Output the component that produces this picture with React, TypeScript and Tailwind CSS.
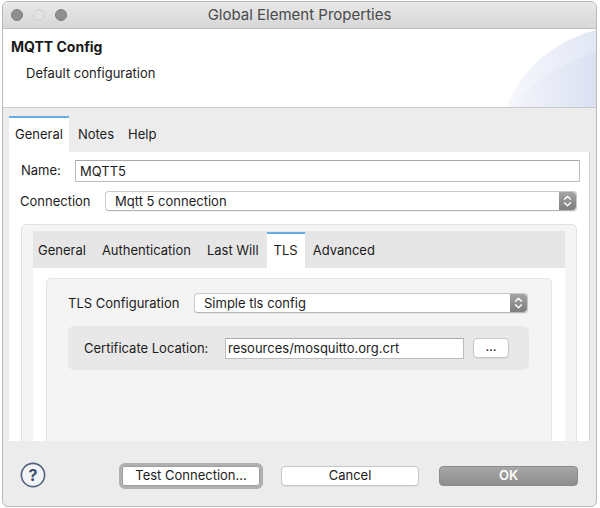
import type { ReactNode } from "react";

function Stepper() {
  return (
    <span className="flex w-[17px] items-center justify-center rounded-r-[4px] bg-gradient-to-b from-[#a4a4a4] to-[#7e7e7e]">
      <svg width="9" height="14" viewBox="0 0 9 14" fill="none">
        <path d="M1.5 5.2 L4.5 2.2 L7.5 5.2" stroke="white" strokeWidth="1.4" strokeLinecap="round" strokeLinejoin="round" />
        <path d="M1.5 8.8 L4.5 11.8 L7.5 8.8" stroke="white" strokeWidth="1.4" strokeLinecap="round" strokeLinejoin="round" />
      </svg>
    </span>
  );
}

function Select({ value, className = "" }: { value: string; className?: string }) {
  return (
    <div
      className={`flex h-[20px] items-stretch rounded-[4px] border border-[#c9c9c9] border-b-[#b5b5b5] bg-white shadow-[0_1px_1px_rgba(0,0,0,0.06)] ${className}`}
    >
      <span className="flex-1 pl-[9px] text-[13px] leading-[18px] text-[#1c1c1c]">{value}</span>
      <Stepper />
    </div>
  );
}

function TextInput({ value, className = "" }: { value: string; className?: string }) {
  return (
    <div
      className={`border border-[#bdbdbd] border-t-[#a9a9a9] bg-white text-[13px] text-[#1c1c1c] ${className}`}
    >
      {value}
    </div>
  );
}

function Tab({ label, active, className = "" }: { label: string; active?: boolean; className?: string }) {
  return (
    <div
      className={`flex items-center text-[13px] text-[#1c1c1c] ${
        active ? "border-t-2 border-[#66ade2] bg-white" : "border-t-2 border-transparent"
      } ${className}`}
    >
      {label}
    </div>
  );
}

function Button({ children, className = "" }: { children: ReactNode; className?: string }) {
  return (
    <div
      className={`flex items-center justify-center text-[13px] text-[#1c1c1c] ${className}`}
    >
      {children}
    </div>
  );
}

export default function App() {
  return (
    <div className="h-[508px] w-[600px] bg-white pl-[2px] pt-px font-['Inter',sans-serif]">
      <div className="flex h-[506px] w-[595px] flex-col overflow-hidden rounded-[6px] border border-[#b9b9b9] bg-[#ececec]">
        {/* title bar */}
        <div className="grid h-[27px] shrink-0 grid-cols-[1fr_auto_1fr] items-center border-b border-[#bdbdbd] bg-gradient-to-b from-[#e9e9e9] to-[#d7d7d7]">
          <div className="flex items-center gap-[10px] pl-[8px]">
            <span className="h-[12px] w-[12px] rounded-full border border-[#7f7f7f] bg-[#8f8f8f]" />
            <span className="h-[12px] w-[12px] rounded-full border border-[#cbcbcb] bg-[#e2e2e2]" />
            <span className="h-[12px] w-[12px] rounded-full border border-[#7f7f7f] bg-[#8f8f8f]" />
          </div>
          <div className="pt-px text-[15px] text-[#4a4a4a]">Global Element Properties</div>
          <div />
        </div>

        {/* header */}
        <div className="flex h-[79px] shrink-0 border-b border-[#cacaca] bg-white">
          <div className="flex-1 pl-[8px] pt-[9px]">
            <div className="text-[14px] font-bold leading-[18px] text-[#1a1a1a]">MQTT Config</div>
            <div className="ml-[15px] mt-[9px] text-[13px] leading-[16px] text-[#1c1c1c]">Default configuration</div>
          </div>
          <svg width="89" height="78" viewBox="0 0 89 78" className="shrink-0">
            <defs>
              <linearGradient id="arcA" x1="0" y1="0" x2="1" y2="0">
                <stop offset="0%" stopColor="#f7f8fc" />
                <stop offset="100%" stopColor="#e2e7f5" />
              </linearGradient>
              <linearGradient id="arcB" x1="0" y1="0" x2="1" y2="0">
                <stop offset="0%" stopColor="#f0f2f9" />
                <stop offset="100%" stopColor="#d6ddf0" />
              </linearGradient>
            </defs>
            <path d="M0 78 C10 45 45 12 89 1 L89 78 Z" fill="url(#arcA)" />
            <path d="M6 78 C22 55 55 33 89 24 L89 78 Z" fill="url(#arcB)" opacity="0.6" />
          </svg>
        </div>

        {/* body */}
        <div className="flex flex-1 flex-col px-[6px] pt-[8px]">
          <div className="flex h-[36px] shrink-0">
            <Tab label="General" active className="px-[6px]" />
            <Tab label="Notes" className="pl-[9px] pr-[7px]" />
            <Tab label="Help" className="px-[7px]" />
          </div>

          <div className="flex h-[289px] shrink-0 flex-col overflow-hidden border-r border-[#d5d5d5] bg-white">
            <div className="mt-[8px] flex items-center pl-[12px] pr-[9px]">
              <span className="w-[54px] text-[13px] text-[#1c1c1c]">Name:</span>
              <TextInput value="MQTT5" className="h-[22px] flex-1 pl-[4px] leading-[20px]" />
            </div>

            <div className="mt-[9px] flex items-center pl-[11px] pr-[12px]">
              <span className="w-[85px] pt-px text-[13px] text-[#1c1c1c]">Connection</span>
              <Select value="Mqtt 5 connection" className="flex-1" />
            </div>

            {/* inner connection box */}
            <div className="ml-[12px] mr-[12px] mt-[12px] h-[260px] shrink-0 rounded-[5px] border border-[#e1e1e1] bg-[#f4f4f4] px-[11px] pt-[6px]">
              <div className="flex h-[37px] bg-[#e6e6e6] pt-px">
                <Tab label="General" className="pl-[5px] pr-[8px]" />
                <Tab label="Authentication" className="px-[8px]" />
                <Tab label="Last Will" className="px-[8px]" />
                <Tab label="TLS" active className="px-[7px]" />
                <Tab label="Advanced" className="px-[8px]" />
              </div>
              <div className="h-[220px] bg-white px-[13px] pt-[10px]">
                <div className="h-[210px] rounded-[5px] border border-[#e4e4e4] bg-[#f4f4f4] pl-[21px] pr-[23px] pt-[14px]">
                  <div className="flex items-center">
                    <span className="w-[126px] pt-px text-[13px] text-[#1c1c1c]">TLS Configuration</span>
                    <Select value="Simple tls config" className="flex-1" />
                  </div>

                  <div className="mr-[-1px] mt-[13px] flex h-[44px] items-center rounded-[6px] bg-[#e8e8e8] pl-[16px]">
                    <span className="w-[141px] pt-px text-[13px] text-[#1c1c1c]">Certificate Location:</span>
                    <TextInput
                      value="resources/mosquitto.org.crt"
                      className="h-[21px] w-[239px] pl-[2px] leading-[19px]"
                    />
                    <Button className="ml-[9px] h-[20px] w-[36px] rounded-[4px] border border-[#c6c6c6] bg-white pb-[3px] shadow-[0_1px_1px_rgba(0,0,0,0.06)]">
                      ...
                    </Button>
                  </div>
                </div>
              </div>
            </div>
          </div>
        </div>

        {/* footer */}
        <div className="flex h-[64px] shrink-0 items-center pt-[4px]">
          <svg width="26" height="26" viewBox="0 0 26 26" className="ml-[17px] mt-[-2px]">
            <circle cx="13" cy="13" r="11.6" fill="#f3f4f7" stroke="#51607e" strokeWidth="1.6" />
            <text
              x="13"
              y="18.6"
              textAnchor="middle"
              fontSize="16"
              fontWeight="700"
              fill="#3f4e6c"
              fontFamily="Inter, sans-serif"
            >
              ?
            </text>
          </svg>
          <Button className="ml-[73px] h-[26px] w-[144px] rounded-[6px] border-[3px] border-[#b0b0b0] bg-white shadow-[inset_0_0_0_1px_#9d9d9d]">
            Test Connection...
          </Button>
          <Button className="ml-[18px] h-[20px] w-[138px] rounded-[4px] border border-[#c7c7c7] bg-white shadow-[0_1px_1px_rgba(0,0,0,0.06)]">
            Cancel
          </Button>
          <Button className="ml-[20px] h-[20px] w-[139px] rounded-[4px] border border-[#8c8c8c] bg-gradient-to-b from-[#a7a7a7] to-[#8d8d8d] font-semibold text-white">
            OK
          </Button>
        </div>
      </div>
    </div>
  );
}
